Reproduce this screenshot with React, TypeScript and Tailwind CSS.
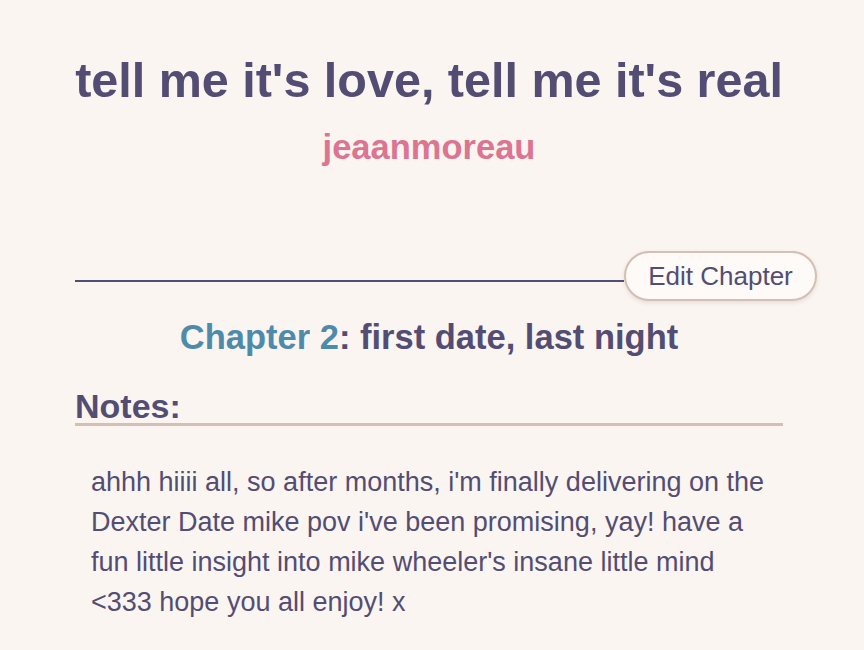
import React from 'react';

const ink = 'text-[#534d73]';

export default function App() {
  return (
    <div className="min-h-screen bg-[#faf5f0] font-['Liberation_Sans',Arial,sans-serif]">
      <div className="ml-[75px] w-[708px] pt-[52px]">
        <h1 className={`text-center text-[48.5px] font-bold leading-[56px] ${ink}`}>
          tell me it's love, tell me it's real
        </h1>
        <p className="mt-[19px] text-center text-[34.5px] font-bold leading-[40px] text-[#dc7592]">jeaanmoreau</p>

        <div className="mt-[84px] flex w-[742px] items-start">
          <div className="mt-[29px] h-[2px] flex-1 bg-[#534d73]" />
          <button className="h-[50px] w-[193px] rounded-full border-2 border-[#d5beb4] bg-[#fdfaf7] text-[26px] leading-none text-[#534d73] shadow-[0_2px_4px_rgba(120,90,80,0.15)]">
            Edit Chapter
          </button>
        </div>

        <h2 className={`mt-[16px] text-center text-[34.5px] font-bold leading-[40px] ${ink}`}>
          <span className="text-[#4e8aa9]">Chapter 2</span>: first date, last night
        </h2>

        <h3 className={`mt-[32px] border-b-[3px] border-[#d5beb4] text-[34px] font-bold leading-[34px] ${ink}`}>
          Notes:
        </h3>

        <p className={`mt-[36px] px-[16px] text-[27px] leading-[40px] ${ink}`}>
          ahhh hiiii all, so after months, i'm finally delivering on the Dexter Date mike pov i've been promising, yay! have a fun little insight into mike wheeler's insane little mind &lt;333 hope you all enjoy! x
        </p>
      </div>
    </div>
  );
}
